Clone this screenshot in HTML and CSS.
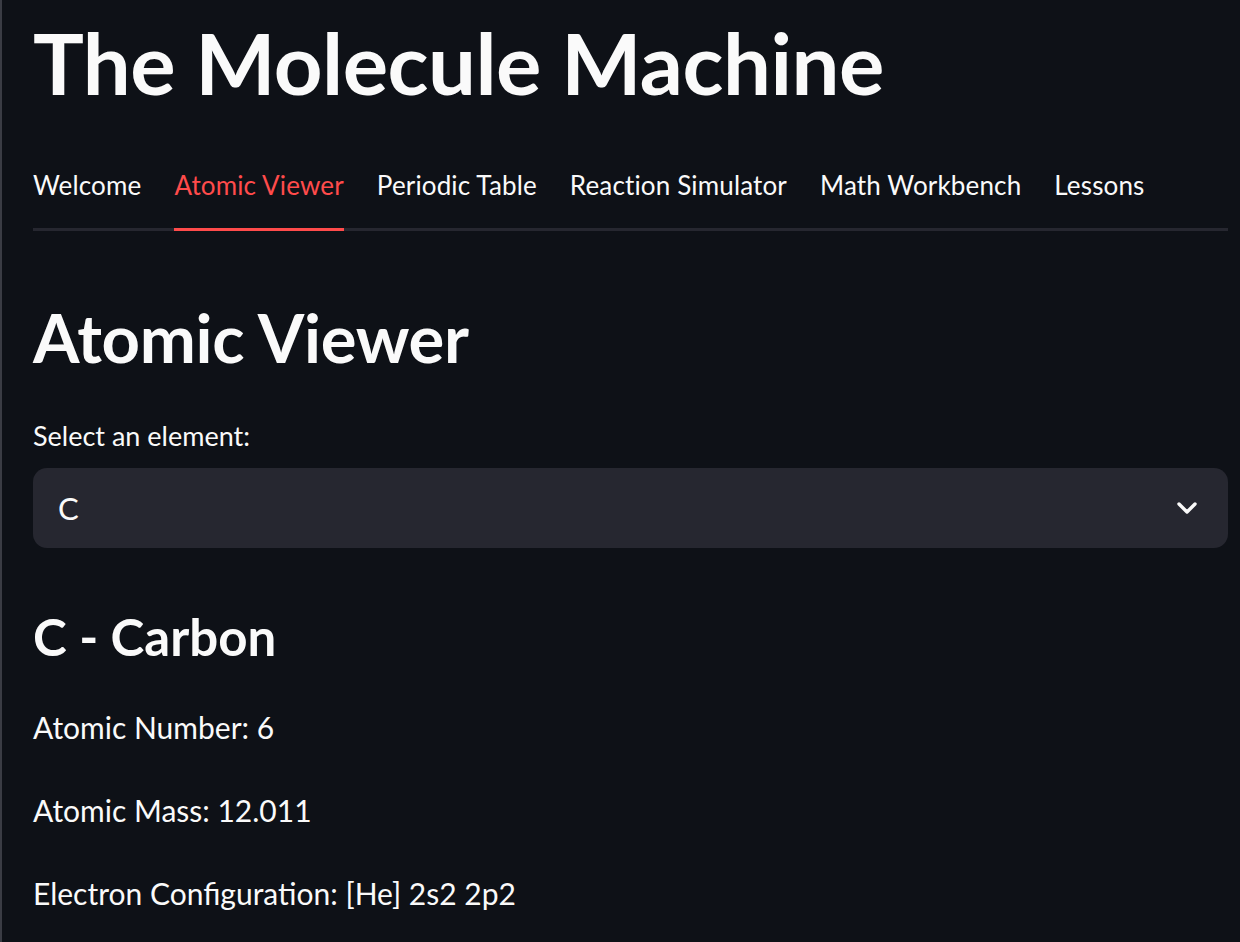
FILE: index.html
```html
<!DOCTYPE html>
<html lang="en">
<head>
<meta charset="utf-8">
<title>The Molecule Machine</title>
<link rel="stylesheet" href="styles.css">
</head>
<body>
<div class="app">
  <main class="main">
    <h1 class="title">The Molecule Machine</h1>
    <nav class="tabs">
      <div class="tab">Welcome</div>
      <div class="tab active">Atomic Viewer</div>
      <div class="tab">Periodic Table</div>
      <div class="tab">Reaction Simulator</div>
      <div class="tab">Math Workbench</div>
      <div class="tab">Lessons</div>
    </nav>
    <h2 class="section-title">Atomic Viewer</h2>
    <div class="field">
      <label class="field-label">Select an element:</label>
      <div class="select">
        <span class="select-value">C</span>
        <svg class="chevron" width="22" height="14" viewBox="0 0 22 14" aria-hidden="true">
          <path d="M3 3 L11 11 L19 3" fill="none" stroke="#fafafa" stroke-width="3.4" stroke-linecap="round" stroke-linejoin="round"/>
        </svg>
      </div>
    </div>
    <h3 class="element-title">C - Carbon</h3>
    <p class="info first">Atomic Number: 6</p>
    <p class="info">Atomic Mass: 12.011</p>
    <p class="info">Electron Configuration: [He] 2s2 2p2</p>
  </main>
</div>
</body>
</html>
```

FILE: styles.css
```css
html, body {
  margin: 0;
  padding: 0;
  background: #0e1117;
}

body {
  font-family: "Lato", "Open Sans", sans-serif;
  color: #fafafa;
}

.app {
  min-height: 942px;
  border-left: 2px solid #3a3c44;
  box-sizing: border-box;
}

.main {
  display: flex;
  flex-direction: column;
  padding: 0 12px 0 31px;
}

.title {
  margin: 0;
  padding-top: 10px;
  font-size: 85px;
  line-height: 104px;
  font-weight: 700;
  letter-spacing: -0.5px;
}

.tabs {
  display: flex;
  gap: 33px;
  margin-top: 53px;
  border-bottom: 3px solid #262730;
}

.tab {
  font-size: 26px;
  line-height: 36px;
  letter-spacing: 0.15px;
  padding-bottom: 25px;
  margin-bottom: -3px;
  border-bottom: 3px solid transparent;
  white-space: nowrap;
}

.tab.active {
  color: #ff4b4b;
  border-bottom-color: #ff4b4b;
}

.section-title {
  margin: 0;
  margin-top: 60px;
  font-size: 67px;
  line-height: 92px;
  font-weight: 700;
  letter-spacing: -0.3px;
}

.field {
  display: flex;
  flex-direction: column;
  margin-top: 35px;
}

.field-label {
  font-size: 27px;
  line-height: 36px;
}

.select {
  margin-top: 14px;
  height: 80px;
  background: #262730;
  border-radius: 14px;
  display: flex;
  align-items: center;
  justify-content: space-between;
  padding: 0 30px 0 25px;
}

.select-value {
  font-size: 31px;
}

.chevron {
  display: block;
}

.element-title {
  margin: 0;
  margin-top: 53px;
  font-size: 51px;
  line-height: 72px;
  font-weight: 700;
}

.info {
  margin: 0;
  margin-top: 31px;
  font-size: 30px;
  line-height: 52px;
}

.info.first {
  margin-top: 28px;
}
```
